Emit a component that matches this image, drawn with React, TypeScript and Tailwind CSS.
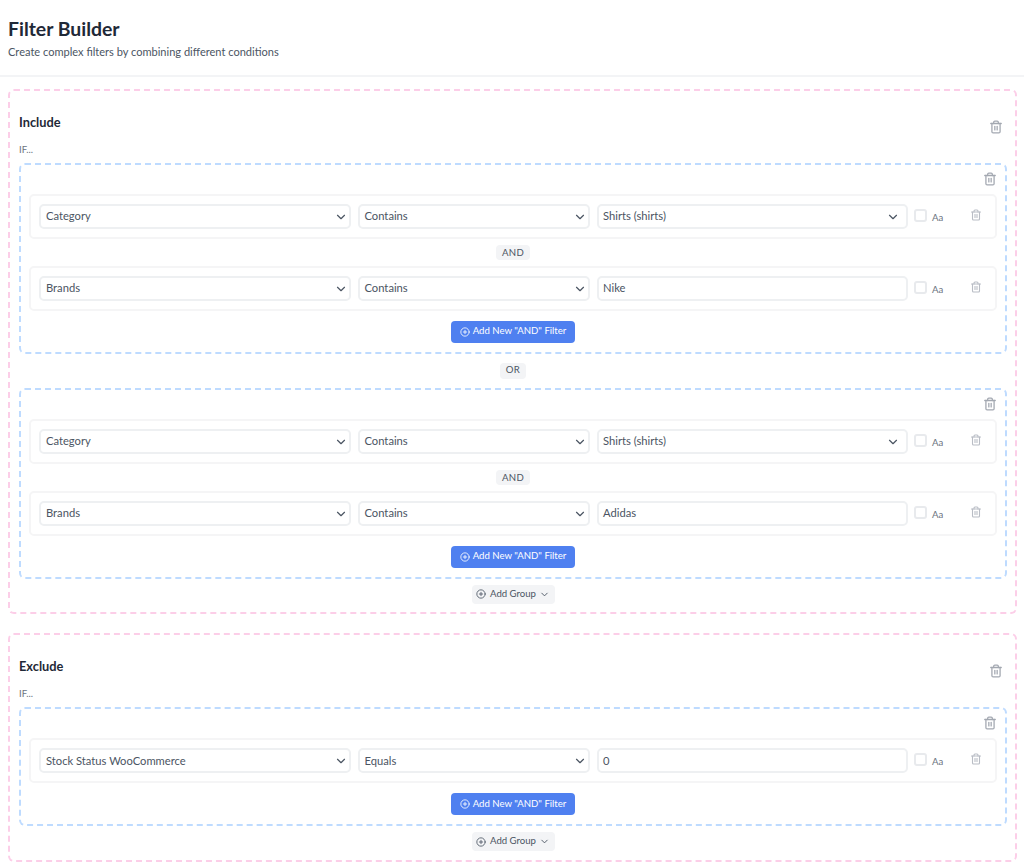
import React from "react";

const Trash = ({ size = 14, className = "" }: { size?: number; className?: string }) => (
  <svg width={size} height={size} viewBox="0 0 24 24" fill="none" stroke="currentColor" strokeWidth="2.2" strokeLinecap="round" strokeLinejoin="round" className={`shrink-0 ${className}`}>
    <path d="M3 6h18" />
    <path d="M19 6v14a2 2 0 0 1-2 2H7a2 2 0 0 1-2-2V6" />
    <path d="M8 6V4a2 2 0 0 1 2-2h4a2 2 0 0 1 2 2v2" />
    <path d="M10 11v6" />
    <path d="M14 11v6" />
  </svg>
);

const Chevron = ({ size = 14, className = "" }: { size?: number; className?: string }) => (
  <svg width={size} height={size} viewBox="0 0 24 24" fill="none" stroke="currentColor" strokeWidth="2" strokeLinecap="round" strokeLinejoin="round" className={`shrink-0 ${className}`}>
    <path d="m6 9 6 6 6-6" />
  </svg>
);

const PlusCircle = ({ size = 11 }: { size?: number }) => (
  <svg width={size} height={size} viewBox="0 0 24 24" fill="none" stroke="currentColor" strokeWidth="2" strokeLinecap="round" strokeLinejoin="round" className="shrink-0">
    <circle cx="12" cy="12" r="10" />
    <path d="M8 12h8" />
    <path d="M12 8v8" />
  </svg>
);

const Select = ({ value, w, pr, pl }: { value: string; w: string; pr: string; pl: string }) => (
  <div className={`${w} ${pr} ${pl} h-[25px] shrink-0 flex items-center justify-between rounded-[5px] border-2 border-[#eef0f2] bg-white text-[11.2px] text-[#4b5563]`}>
    <span>{value}</span>
    <Chevron className="text-[#4b5563]" />
  </div>
);

type RowData = { field: string; op: string; value: string; valueSelect?: boolean };

const Row = ({ field, op, value, valueSelect }: RowData) => (
  <div className="flex h-[45px] items-center rounded-[5px] border-2 border-[#f5f5f6] bg-white pl-[8px]">
    <div className="flex items-center gap-[7px]">
      <Select value={field} w="w-[312px]" pr="pr-[1.5px]" pl="pl-[5px]" />
      <Select value={op} w="w-[231.5px]" pr="pr-[1px]" pl="pl-[4.5px]" />
      {valueSelect ? (
        <Select value={value} w="w-[311px]" pr="pr-[6px]" pl="pl-[4.5px]" />
      ) : (
        <div className="flex h-[25px] w-[311px] shrink-0 items-center rounded-[5px] border-2 border-[#eef0f2] bg-white pl-[4.5px] text-[11.2px] text-[#4b5563]">{value}</div>
      )}
    </div>
    <div className="ml-[6px] mb-[3px] h-[13px] w-[13px] shrink-0 rounded-[3px] border-2 border-[#e8eaed] bg-white" />
    <span className="ml-[5.5px] mt-[2px] text-[9.6px] text-[#6b7280]">Aa</span>
    <Trash size={12} className="ml-[27px] mb-[3px] text-[#b9bdc5]" />
  </div>
);

const Pill = ({ label, cls }: { label: string; cls: string }) => (
  <div className={`flex justify-center ${cls}`}>
    <span className="flex items-center rounded-[4px] bg-gray-100 px-[6px] text-[9.6px] tracking-[0.3px] text-[#4b5563]">{label}</span>
  </div>
);

const Group = ({ rows }: { rows: RowData[] }) => (
  <div className="rounded-md border-2 border-dashed border-blue-200 px-[8px] pb-[9px]">
    <div className="flex h-[29.7px] justify-end pt-[7.7px]">
      <Trash size={14} className="text-[#a3a8b1]" />
    </div>
    {rows.map((r, i) => (
      <div key={i}>
        {i > 0 && <Pill label="AND" cls="my-[6px] h-[15px]" />}
        <Row {...r} />
      </div>
    ))}
    <div className="mt-[9.3px] flex justify-center">
      <button className="flex h-[22px] w-[124px] items-center justify-center gap-[3px] rounded-[4px] bg-[#4f80f0] text-[9.6px] text-white">
        <PlusCircle size={10} />
        <span>Add New "AND" Filter</span>
      </button>
    </div>
  </div>
);

const AddGroup = () => (
  <div className="mt-[6.4px] flex justify-center">
    <button className="flex h-[19px] w-[83px] items-center justify-center rounded-[4px] bg-gray-100 text-[9.6px] text-[#4b5563]">
      <PlusCircle size={10} />
      <span className="ml-[4px]">Add Group</span>
      <Chevron size={11} className="ml-[3px]" />
    </button>
  </div>
);

const Section = ({ title, children }: { title: string; children: React.ReactNode }) => (
  <section className="rounded-md border-2 border-dashed border-pink-200 pl-[9px] pr-[8px] pb-[8.4px] pt-[21px]">
    <div className="flex h-[20px] items-start justify-between">
      <h2 className="text-[12.8px] font-bold leading-[20px] text-[#1f2937]">{title}</h2>
      <Trash size={14} className="mr-[4px] mt-[8px] text-[#a3a8b1]" />
    </div>
    <div className="mb-[6.6px] mt-[12px] text-[9.6px] leading-[12px] text-[#6b7280]">IF...</div>
    {children}
    <AddGroup />
  </section>
);

export default function App() {
  return (
    <div className="min-h-[868px] bg-white font-['Lato',sans-serif]">
      <header className="h-[77px] border-b-2 border-gray-100 px-[8px] pt-[16px]">
        <h1 className="text-[19.4px] font-bold leading-[26px] text-[#1f2937]">Filter Builder</h1>
        <p className="mt-[1px] text-[11.05px] leading-[18px] text-[#4b5563]">Create complex filters by combining different conditions</p>
      </header>
      <main className="flex flex-col gap-[18.8px] pl-[8px] pr-[7px] pt-[12px]">
        <Section title="Include">
          <Group
            rows={[
              { field: "Category", op: "Contains", value: "Shirts (shirts)", valueSelect: true },
              { field: "Brands", op: "Contains", value: "Nike" },
            ]}
          />
          <Pill label="OR" cls="my-[9px] h-[16px]" />
          <Group
            rows={[
              { field: "Category", op: "Contains", value: "Shirts (shirts)", valueSelect: true },
              { field: "Brands", op: "Contains", value: "Adidas" },
            ]}
          />
        </Section>
        <Section title="Exclude">
          <Group rows={[{ field: "Stock Status WooCommerce", op: "Equals", value: "0" }]} />
        </Section>
      </main>
    </div>
  );
}
